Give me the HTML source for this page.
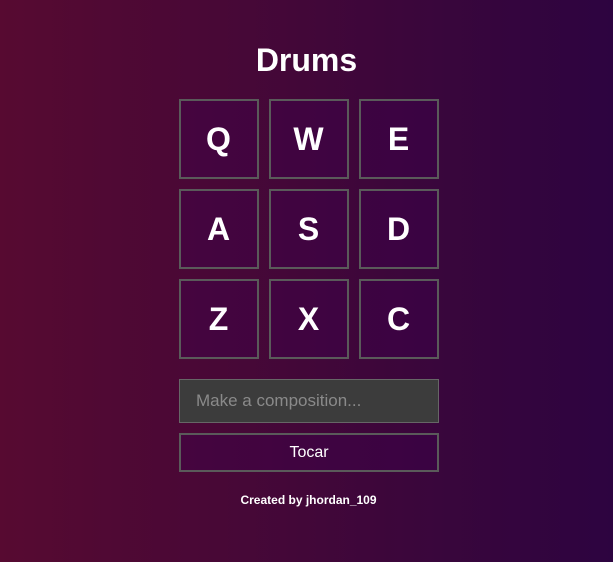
<!DOCTYPE html>
<html><head><style>
body{margin:0;width:613px;height:562px;overflow:hidden;background:linear-gradient(to right,#570a31,#2d0440);font-family:"Liberation Sans",sans-serif;color:#fff;position:relative}
h1{position:absolute;top:41px;left:0;width:613px;text-align:center;margin:0;font-size:32px;font-weight:bold;line-height:38px}
.k{position:absolute;width:76px;height:76px;border:2px solid #5a5a5a;display:flex;align-items:center;justify-content:center;font-size:32px;font-weight:bold;background:rgba(60,0,80,0.35);padding-right:1px;box-sizing:content-box;width:75px}
.in{position:absolute;left:179px;top:379px;border:1px solid #666;background:#3c3c3c;color:#8a8a8a;font-size:17px;line-height:42px;padding-left:16px;box-sizing:border-box;width:260px;height:44px}
.bt{position:absolute;left:179px;top:433px;width:256px;height:35px;border:2px solid #5a5a5a;text-align:center;line-height:35px;font-size:16px;background:rgba(60,0,80,0.35)}
.f{position:absolute;top:493px;left:0;width:617px;text-align:center;font-size:12px;font-weight:bold}
</style></head><body>
<h1>Drums</h1>
<div class="k" style="left:179px;top:99px">Q</div>
<div class="k" style="left:269px;top:99px">W</div>
<div class="k" style="left:359px;top:99px">E</div>
<div class="k" style="left:179px;top:189px">A</div>
<div class="k" style="left:269px;top:189px">S</div>
<div class="k" style="left:359px;top:189px">D</div>
<div class="k" style="left:179px;top:279px">Z</div>
<div class="k" style="left:269px;top:279px">X</div>
<div class="k" style="left:359px;top:279px">C</div>
<div class="in">Make a composition...</div>
<div class="bt">Tocar</div>
<div class="f">Created by jhordan_109</div>
</body></html>
